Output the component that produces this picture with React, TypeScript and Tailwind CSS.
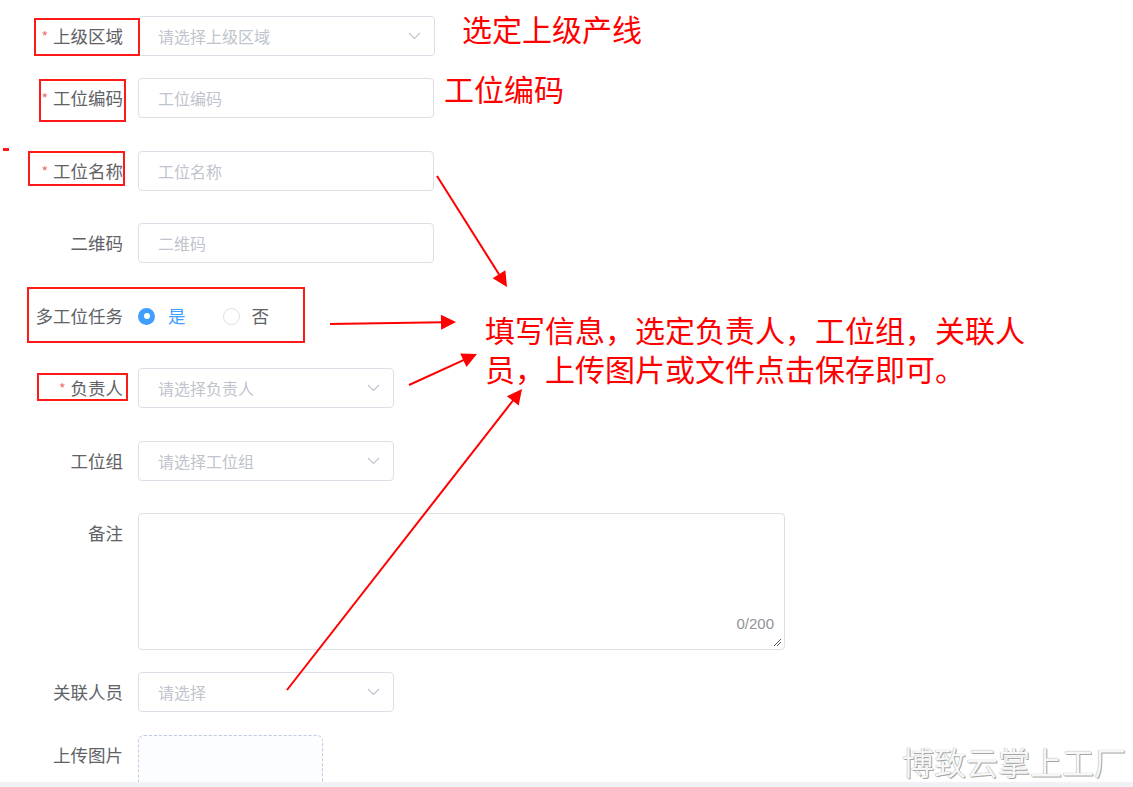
import React from "react";

const FONT = '"Noto Sans CJK SC", "Noto Sans", sans-serif';

function Chevron() {
  return (
    <svg width="13" height="8" viewBox="0 0 13 8" className="shrink-0">
      <path d="M1 1 L6.5 6.5 L12 1" fill="none" stroke="#c0c4cc" strokeWidth="1.2" />
    </svg>
  );
}

function Label({ text, required }: { text: string; required?: boolean }) {
  return (
    <div className="flex h-[40px] w-[123px] shrink-0 items-center justify-end text-[17.5px] leading-none text-[#606266]">
      {required && <span className="mr-[5px] text-[14px] leading-none text-[#f56c6c]">*</span>}
      <span>{text}</span>
    </div>
  );
}

function Input({ placeholder, width }: { placeholder: string; width: string }) {
  return (
    <div
      className={`ml-[15px] flex h-[40px] ${width} items-center rounded-[4px] border border-[#dcdfe6] bg-white pl-[19px] text-[16px] leading-none text-[#c0c4cc]`}
    >
      {placeholder}
    </div>
  );
}

function Select({ placeholder, width }: { placeholder: string; width: string }) {
  return (
    <div
      className={`ml-[15px] flex h-[40px] ${width} items-center justify-between rounded-[4px] border border-[#dcdfe6] bg-white pl-[19px] pr-[13px] text-[16px] leading-none text-[#c0c4cc]`}
    >
      <span>{placeholder}</span>
      <Chevron />
    </div>
  );
}

function Arrow({ x1, y1, x2, y2 }: { x1: number; y1: number; x2: number; y2: number }) {
  const dx = x2 - x1;
  const dy = y2 - y1;
  const len = Math.sqrt(dx * dx + dy * dy);
  const ux = dx / len;
  const uy = dy / len;
  const hl = 15;
  const hw = 7.5;
  const bx = x2 - ux * hl;
  const by = y2 - uy * hl;
  const px = -uy;
  const py = ux;
  const pts = `${x2},${y2} ${bx + px * hw},${by + py * hw} ${bx - px * hw},${by - py * hw}`;
  return (
    <g>
      <line x1={x1} y1={y1} x2={bx + ux * 2} y2={by + uy * 2} stroke="#ff0000" strokeWidth="2" />
      <polygon points={pts} fill="#ff0000" />
    </g>
  );
}

function Box({ l, t, w, h }: { l: number; t: number; w: number; h: number }) {
  return (
    <div
      className="absolute border-2 border-[#ff1a1a]"
      style={{ left: l, top: t, width: w, height: h }}
    />
  );
}

export default function App() {
  return (
    <div className="relative h-[787px] w-[1133px] overflow-hidden bg-white" style={{ fontFamily: FONT }}>
      <div className="h-[782px] overflow-hidden pt-[16px]">
        <div className="flex flex-col">
          <div className="flex h-[40px]">
            <Label text="上级区域" required />
            <Select placeholder="请选择上级区域" width="w-[297px]" />
          </div>
          <div className="mt-[22px] flex h-[40px]">
            <Label text="工位编码" required />
            <Input placeholder="工位编码" width="w-[296px]" />
          </div>
          <div className="mt-[33px] flex h-[40px]">
            <Label text="工位名称" required />
            <Input placeholder="工位名称" width="w-[296px]" />
          </div>
          <div className="mt-[32px] flex h-[40px]">
            <Label text="二维码" />
            <Input placeholder="二维码" width="w-[296px]" />
          </div>
          <div className="mt-[33px] flex h-[40px]">
            <Label text="多工位任务" />
            <div className="ml-[15px] flex h-[40px] items-center text-[17.5px] leading-none">
              <span className="flex h-[17px] w-[17px] items-center justify-center rounded-full bg-[#409eff]">
                <span className="h-[6px] w-[6px] rounded-full bg-white" />
              </span>
              <span className="ml-[13px] text-[#409eff]">是</span>
              <span className="ml-[37px] h-[17px] w-[17px] rounded-full border border-[#dcdfe6] bg-white" />
              <span className="ml-[12px] text-[#606266]">否</span>
            </div>
          </div>
          <div className="mt-[32px] flex h-[40px]">
            <Label text="负责人" required />
            <Select placeholder="请选择负责人" width="w-[256px]" />
          </div>
          <div className="mt-[33px] flex h-[40px]">
            <Label text="工位组" />
            <Select placeholder="请选择工位组" width="w-[256px]" />
          </div>
          <div className="mt-[32px] flex h-[137px]">
            <Label text="备注" />
            <div className="relative ml-[15px] h-[137px] w-[647px] rounded-[4px] border border-[#dcdfe6] bg-white">
              <span
                className="absolute bottom-[18px] right-[10px] text-[15px] leading-none text-[#909399]"
                style={{ fontFamily: '"Liberation Sans", Arial, sans-serif' }}
              >
                0/200
              </span>
              <svg className="absolute bottom-[2px] right-[2px]" width="9" height="9" viewBox="0 0 9 9">
                <path d="M1 8 L8 1 M4 8 L8 4" stroke="#555" strokeWidth="1" />
              </svg>
            </div>
          </div>
          <div className="mt-[22px] flex h-[40px]">
            <Label text="关联人员" />
            <Select placeholder="请选择" width="w-[256px]" />
          </div>
          <div className="mt-[23px] flex">
            <Label text="上传图片" />
            <div className="ml-[15px] h-[185px] w-[185px] rounded-[6px] border border-dashed border-[#c0ccda] bg-[#fbfdff]" />
          </div>
        </div>
      </div>
      <div className="h-[5px] bg-[#f0f2f5]" />

      {/* annotation overlays */}
      <Box l={34} t={18} w={106} h={38} />
      <Box l={39} t={79} w={87} h={43} />
      <Box l={28} t={151} w={97} h={35} />
      <div className="absolute left-[3px] top-[148px] h-[3px] w-[6px] bg-[#ff1a1a]" />
      <Box l={27} t={287} w={278} h={56} />
      <Box l={37} t={373} w={91} h={28} />

      <svg className="pointer-events-none absolute left-0 top-0" width="1133" height="787">
        <Arrow x1={437} y1={176} x2={507} y2={287} />
        <Arrow x1={330} y1={324} x2={456} y2={322} />
        <Arrow x1={409} y1={385} x2={477} y2={354} />
        <Arrow x1={287} y1={690} x2={522} y2={389} />
      </svg>

      <div className="absolute left-[462px] top-[13px] text-[30px] leading-none text-[#ff0000]">选定上级产线</div>
      <div className="absolute left-[444px] top-[73px] text-[30px] leading-none text-[#ff0000]">工位编码</div>
      <div className="absolute left-[485px] top-[314px] text-[30px] leading-none text-[#ff0000]">
        填写信息，选定负责人，工位组，关联人
      </div>
      <div className="absolute left-[485px] top-[353px] text-[30px] leading-none text-[#ff0000]">
        员，上传图片或文件点击保存即可。
      </div>

      <div
        className="absolute left-[902px] top-[745px] text-[32px] leading-none text-[#f7f7f7]"
        style={{ textShadow: "0 0 1px #888, 1px 1px 0.5px #aaa" }}
      >
        博致云掌上工厂
      </div>
    </div>
  );
}
